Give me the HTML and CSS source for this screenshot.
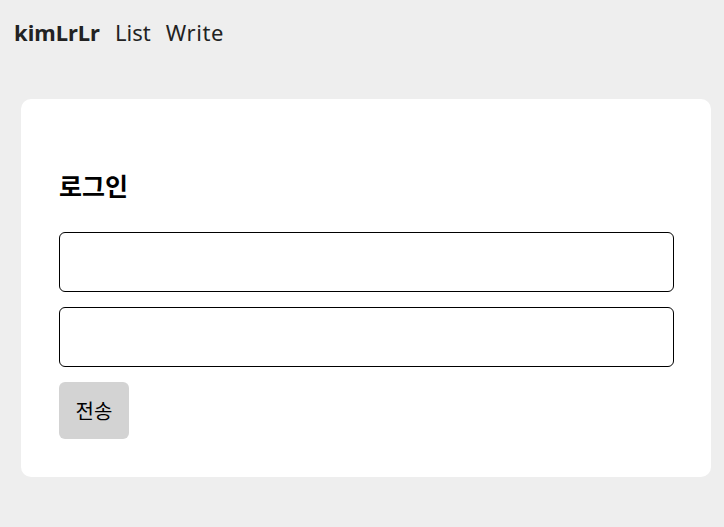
FILE: index.html
```html
<!DOCTYPE html>
<html lang="ko">
<head>
<meta charset="utf-8">
<link rel="stylesheet" href="styles.css">
</head>
<body>
<nav class="nav">
  <span class="logo">kimLrLr</span>
  <span class="link">List</span>
  <span class="link write">Write</span>
</nav>
<main class="card">
  <h2 class="title">로그인</h2>
  <form class="form">
    <input class="field" type="text">
    <input class="field" type="password">
    <button class="submit" type="button">전송</button>
  </form>
</main>
</body>
</html>
```
FILE: styles.css
```css
html, body {
  margin: 0;
  padding: 0;
  background: #eeeeee;
  font-family: "Noto Sans", "Noto Sans CJK KR", sans-serif;
}
.nav {
  display: flex;
  align-items: center;
  gap: 15px;
  height: 64px;
  padding-left: 14px;
  font-size: 22px;
  color: #222;
}
.logo {
  font-weight: 700;
}
.write {
  letter-spacing: 0.6px;
}
.card {
  margin: 35px 0 0 21px;
  width: 690px;
  box-sizing: border-box;
  background: #fff;
  border-radius: 10px;
  padding: 68px 37px 38px 38px;
}
.title {
  margin: 0;
  font-family: "Noto Sans CJK KR", sans-serif;
  font-size: 25px;
  font-weight: 700;
  line-height: 36px;
  color: #000;
}
.form {
  display: flex;
  flex-direction: column;
  align-items: flex-start;
  gap: 15px;
  margin-top: 29px;
}
.field {
  width: 100%;
  height: 60px;
  box-sizing: border-box;
  border: 1px solid #000;
  border-radius: 6px;
  background: #fff;
  margin: 0;
}
.submit {
  width: 70px;
  height: 57px;
  border: none;
  border-radius: 6px;
  background: #d3d3d3;
  font-family: "Noto Sans CJK KR", sans-serif;
  font-size: 20px;
  color: #000;
  padding: 0;
}
```
